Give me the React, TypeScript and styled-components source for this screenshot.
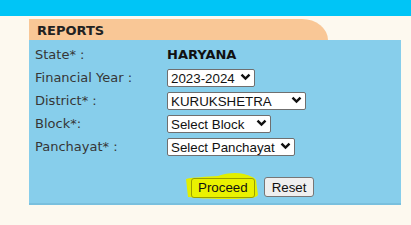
import styled, { createGlobalStyle } from 'styled-components';

const GlobalStyle = createGlobalStyle`
  html, body {
    margin: 0;
    padding: 0;
    background: #fdf9ef;
  }
  body {
    font-family: "DejaVu Sans", Verdana, sans-serif;
  }
`

const Page = styled.div`
  width: 411px;
  height: 225px;
  background: #fdf9ef;
  overflow: hidden;
`

const TopBar = styled.div`
  height: 16px;
  background: #00c5f6;
`

const Content = styled.div`
  padding: 3px 10px 0 29px;
`

const Tab = styled.div`
  width: 299px;
  height: 21px;
  box-sizing: border-box;
  padding: 5px 0 0 8px;
  background: #f9c796;
  border-top-right-radius: 26px 21px;
  font-weight: bold;
  font-size: 13px;
  line-height: 13px;
  color: #222222;
`

const Panel = styled.div`
  width: 372px;
  box-sizing: border-box;
  padding: 5px 0 5px 6px;
  background: #87ceeb;
  border-bottom: 2px solid #79c0de;
`

const FormGrid = styled.div`
  display: grid;
  grid-template-columns: 132px auto;
  grid-auto-rows: 18px;
  row-gap: 5px;
  align-items: center;
`

const Label = styled.div`
  font-size: 13px;
  color: #363636;
  white-space: nowrap;
`

const Value = styled.div`
  font-size: 13px;
  font-weight: bold;
  color: #111111;
`

const SelectWrap = styled.div`
  position: relative;
  display: inline-block;
  width: ${({ $w }: { $w: number }) => $w}px;
  height: 18px;
`

const Select = styled.select`
  appearance: none;
  width: 100%;
  height: 18px;
  box-sizing: border-box;
  margin: 0;
  padding: 0 0 0 3px;
  border: 1px solid #6f6f6f;
  border-radius: 2px;
  background: #ffffff;
  font-family: "Liberation Sans", Arial, sans-serif;
  font-size: 13.33px;
  color: #111111;
`

const Chevron = styled.svg`
  position: absolute;
  right: 4px;
  top: 5px;
  pointer-events: none;
`

const ButtonRow = styled.div`
  display: flex;
  gap: 9px;
  padding: 22px 0 0 156px;
`

const Highlight = styled.div`
  position: relative;
  display: inline-block;
`

const Marker = styled.svg`
  position: absolute;
  left: -7px;
  top: -6px;
  pointer-events: none;
`

const Button = styled.button`
  position: relative;
  height: 20px;
  box-sizing: border-box;
  padding: 0 ${({ $marked }: { $marked?: boolean }) => ($marked ? 6 : 7)}px;
  border: 1px solid ${({ $marked }: { $marked?: boolean }) => ($marked ? '#9aa000' : '#767676')};
  border-radius: 3px;
  background: ${({ $marked }: { $marked?: boolean }) => ($marked ? '#eaf200' : '#efefef')};
  font-family: "Liberation Sans", Arial, sans-serif;
  font-size: 13.33px;
  color: #111111;
  cursor: pointer;
`

function Dropdown({ width, options }: { width: number; options: string[] }) {
  return (
    <SelectWrap $w={width}>
      <Select defaultValue={options[0]}>
        {options.map((o) => (
          <option key={o}>{o}</option>
        ))}
      </Select>
      <Chevron width="11" height="8" viewBox="0 0 11 8">
        <path d="M1.5 1.6 5.5 5.6 9.5 1.6" fill="none" stroke="#111" strokeWidth="2.4" />
      </Chevron>
    </SelectWrap>
  )
}

export default function App() {
  return (
    <Page>
      <GlobalStyle />
      <TopBar />
      <Content>
        <Tab>REPORTS</Tab>
        <Panel>
          <FormGrid>
            <Label>State* :</Label>
            <Value>HARYANA</Value>
            <Label>Financial Year :</Label>
            <div><Dropdown width={88} options={['2023-2024']} /></div>
            <Label>District* :</Label>
            <div><Dropdown width={139} options={['KURUKSHETRA']} /></div>
            <Label>Block*:</Label>
            <div><Dropdown width={104} options={['Select Block']} /></div>
            <Label>Panchayat* :</Label>
            <div><Dropdown width={128} options={['Select Panchayat']} /></div>
          </FormGrid>
          <ButtonRow>
            <Highlight>
              <Marker width="76" height="30" viewBox="0 0 76 30">
                <path
                  d="M2 8 C10 6 22 6 34 5 C42 2 52 1 60 3 C66 5 70 6 72 9 L74 24 C72 27 66 28 40 28 C24 28 12 27 4 26 Z"
                  fill="#e2ef00"
                />
              </Marker>
              <Button $marked>Proceed</Button>
            </Highlight>
            <Button>Reset</Button>
          </ButtonRow>
        </Panel>
      </Content>
    </Page>
  )
}
